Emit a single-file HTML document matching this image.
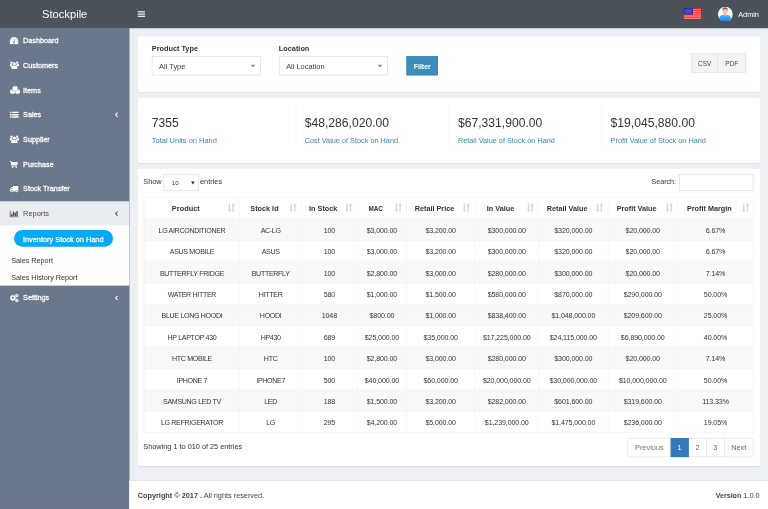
<!DOCTYPE html>
<html>
<head>
<meta charset="utf-8">
<title>Stockpile</title>
<style>
*{box-sizing:border-box;}
html,body{margin:0;padding:0;width:768px;height:509px;overflow:hidden;background:#ecf0f5;}
body{font-family:"Liberation Sans",sans-serif;position:relative;}
#clip{position:absolute;left:0;top:0;width:768px;height:509px;overflow:hidden;}
#s{filter:blur(0.5px);position:absolute;left:0;top:0;width:1366px;height:905px;transform:scale(0.562225);transform-origin:0 0;background:#ecf0f5;color:#333;font-size:13.2px;overflow:visible;font-family:"Liberation Sans",sans-serif;}
.abs{position:absolute;}
.t{position:absolute;white-space:nowrap;line-height:20px;}
svg{display:block;}
/* header */
#hdr{position:absolute;left:0;top:0;width:1366px;height:50px;background:#4b525a;}
#logo{position:absolute;left:0;top:0;width:230px;height:50px;line-height:50px;text-align:center;color:#fff;font-size:19.9px;}
/* sidebar */
#side{position:absolute;left:0;top:50px;width:230px;height:855px;background:#6b778a;}
.mi{position:absolute;left:0;width:230px;height:44px;color:#fff;font-weight:normal;-webkit-text-stroke:0.45px #fff;font-size:12.9px;line-height:46px;}
.mi span{position:absolute;left:41px;top:0;white-space:nowrap;}
.mi svg{position:absolute;}
.mi.act{background:#e9ecf0;color:#4a4a4a;font-weight:normal;font-size:13.2px;-webkit-text-stroke:0;}
#tree{position:absolute;left:0;top:351.300px;width:230px;height:106.300px;background:#fff;}
.sub{position:absolute;left:20px;color:#333;font-size:12.85px;line-height:30px;height:30px;white-space:nowrap;}
#pill{position:absolute;left:24.500px;top:7.700px;width:176px;height:30px;border-radius:15px;background:#03a9f4;color:#fff;font-weight:normal;-webkit-text-stroke:0.45px #fff;font-size:13.100px;line-height:33px;text-align:center;white-space:nowrap;}
/* boxes */
.box{position:absolute;left:245px;width:1106.700px;background:#fff;border-radius:3px;box-shadow:0 1px 1px rgba(0,0,0,0.1);}
.lbl{font-weight:bold;font-size:13px;color:#333;}
.sel{position:absolute;height:34px;border:1px solid #d2d6de;background:#fff;font-size:13.2px;line-height:34px;padding-left:12px;color:#444;}
.sel i{position:absolute;right:9px;top:14px;width:0;height:0;border-left:4px solid transparent;border-right:4px solid transparent;border-top:5px solid #888;}
.big{font-size:21.6px;color:#333;line-height:30px;}
.sm{font-size:13px;color:#4084b2;}
.vl{position:absolute;top:11px;width:1px;height:75px;background:#f0f0f0;}
/* table */
#dt{position:absolute;left:10px;top:51px;width:1084px;border-collapse:collapse;table-layout:fixed;}
#dt th,#dt td{border:1px solid #f0f0f0;height:38px;padding:0;text-align:center;vertical-align:middle;white-space:nowrap;overflow:hidden;color:#333;}
#dt th{font-weight:bold;font-size:12.9px;position:relative;padding-right:22px;}
#dt td{font-size:12.6px;color:#333;}
#dt tbody tr:nth-child(odd) td{background:#f9f9f9;}
.uc{letter-spacing:-0.58px;}
.nm{letter-spacing:-0.2px;}
.srt{position:absolute;right:7.500px;top:8.500px;opacity:0.2;}
#dt th:last-child .srt{right:6px;}
/* pagination */
.pg{position:absolute;top:479px;height:34px;border:1px solid #ddd;background:#fff;color:#666;font-size:13.2px;line-height:32px;text-align:center;}
#dt tbody td span{position:relative;top:1px;}
#dt tbody tr:nth-child(3) td span,#dt tbody tr:nth-child(8) td span{top:2px;}
#dt th:first-child,#dt td:first-child{border-left-width:2px;}
.h3{font-size:11.3px;}
.h0{font-size:13.1px;}

</style>
</head>
<body>
<svg width="0" height="0" style="position:absolute">
<defs>
<symbol id="i-sort" viewBox="0 0 13 15"><g fill="#333"><path d="M2.400 1h2.200v9.800h1.900L3.500 14.400.500 10.800h1.900z"/><path d="M8.400 14.400h2.200V4.200h1.900L9.500.600 6.500 4.200h1.900z"/></g></symbol>
<symbol id="i-dash" viewBox="0 0 16 13"><path fill="currentColor" d="M8 0a8 8 0 0 0-8 8c0 1.600.450 3.050 1.250 4.300.150.250.400.400.700.400h12.100c.300 0 .550-.150.700-.400A7.900 7.900 0 0 0 16 8a8 8 0 0 0-8-8z"/><g fill="#6b778a"><circle cx="2.600" cy="8" r=".800"/><circle cx="4.200" cy="4.200" r=".800"/><circle cx="8" cy="2.600" r=".800"/><circle cx="11.800" cy="4.200" r=".800"/><circle cx="13.400" cy="8" r=".800"/><circle cx="7.700" cy="9.800" r="1.500"/><path d="M7.200 9.200l1.900-5.200.8.300-1.500 5.300z"/></g></symbol>
<symbol id="i-users" viewBox="0 0 17 15"><g fill="currentColor"><circle cx="8.500" cy="5.500" r="2.750"/><circle cx="3.500" cy="3.300" r="2.100"/><circle cx="13.500" cy="3.300" r="2.100"/><path d="M4.600 14.800c-1 0-1.600-.600-1.600-1.500 0-2.600.700-5 3-5.200.700.700 1.500 1.100 2.500 1.100s1.800-.400 2.500-1.100c2.300.200 3 2.600 3 5.200 0 .900-.600 1.500-1.600 1.500z"/><path d="M0 8.300c0-1.800.500-2.900 1.700-2.900.500.500 1.100.800 1.800.800.400 0 .800-.100 1.100-.200-.100.300-.100.600-.100.900 0 .700.200 1.400.600 2-.900 0-1.700.400-2.300 1.100H1.400C.500 10 0 9.500 0 8.300z"/><path d="M17 8.300c0-1.800-.500-2.900-1.700-2.900-.500.500-1.100.800-1.800.800-.400 0-.800-.100-1.100-.200.100.300.100.600.100.900 0 .700-.200 1.400-.600 2 .900 0 1.700.400 2.300 1.100h1.400c.900 0 1.400-.500 1.400-1.700z"/></g></symbol>
<symbol id="i-cubes" viewBox="0 0 19 16"><g fill="currentColor" stroke="currentColor" stroke-width="0.600" stroke-linejoin="round"><path d="M9.500 .500l3.900 1.700v4.600L9.500 8.700 5.600 6.800V2.200z"/><path d="M5 6.900l4 1.700v4.800L5 15.400 1 13.400V8.600z"/><path d="M14 6.900l4 1.700v4.800l-4 2-4-2V8.600z"/></g><g fill="#6b778a" opacity="0.550"><path d="M9.500 1.500l2.300.9-2.300.9-2.300-.9z"/><path d="M5 8.100l2.300.9-2.300.9-2.300-.9z"/><path d="M14 8.100l2.300.9-2.300.9-2.300-.9z"/><path d="M9.350 8.800v5.800h.3V8.800z"/></g></symbol>
<symbol id="i-list" viewBox="0 0 16 12"><g fill="currentColor"><rect x="0" y="0.500" width="3" height="2.600" rx=".4"/><rect x="4.500" y="0.500" width="11.500" height="2.600" rx=".4"/><rect x="0" y="4.700" width="3" height="2.600" rx=".4"/><rect x="4.500" y="4.700" width="11.500" height="2.600" rx=".4"/><rect x="0" y="8.900" width="3" height="2.600" rx=".4"/><rect x="4.500" y="8.900" width="11.500" height="2.600" rx=".4"/></g></symbol>
<symbol id="i-cart" viewBox="0 0 15 13"><g fill="currentColor"><path d="M0 .5h2.600c.4 0 .6.300.7.700l.2.900h10.700c.5 0 .8.400.7.900l-.9 4c-.1.400-.4.700-.8.700H4.600l.2 1h8c.4 0 .7.300.7.700s-.3.700-.7.700H4.200c-.4 0-.6-.3-.7-.6L2 1.900H0z"/><circle cx="5.300" cy="11.700" r="1.200"/><circle cx="11.800" cy="11.700" r="1.200"/></g></symbol>
<symbol id="i-truck" viewBox="0 0 16 13"><g fill="currentColor"><path d="M6 .8h9.300c.4 0 .7.300.7.700v8.300c0 .4-.3.700-.7.700h-.9a2 2 0 0 0-4 0H6.800a2 2 0 0 0-4 0H1.400C.6 10.500.6 9.500 1 9.500V6.200c0-.3.100-.6.300-.800l2-2.200c.2-.2.500-.4.800-.4H6zM2.300 6.300h2.600V4H4.200c-.1 0-.2 0-.3.100L2.400 5.800c-.1.100-.1.200-.1.300z"/><circle cx="4.800" cy="10.800" r="1.400"/><circle cx="12.400" cy="10.800" r="1.400"/></g></symbol>
<symbol id="i-chart" viewBox="0 0 16 13"><g fill="currentColor"><path d="M0 .3h1.700v10.600H16v1.700H0z"/><rect x="2.800" y="6.300" width="2.400" height="4"/><rect x="5.900" y="2.300" width="2.400" height="8"/><rect x="9" y="4.300" width="2.400" height="6"/><rect x="12.100" y="1.300" width="2.400" height="9"/></g></symbol>
<symbol id="i-cogs" viewBox="0 0 17 16"><g fill="none" stroke="currentColor"><circle cx="5.900" cy="7.800" r="3.200" stroke-width="2.600"/><circle cx="5.900" cy="7.800" r="4.700" stroke-width="1.600" stroke-dasharray="1.850 1.850"/><circle cx="13" cy="3.500" r="1.800" stroke-width="1.800"/><circle cx="13" cy="3.500" r="2.900" stroke-width="1.100" stroke-dasharray="1.140 1.140"/><circle cx="13" cy="12.300" r="1.800" stroke-width="1.800"/><circle cx="13" cy="12.300" r="2.900" stroke-width="1.100" stroke-dasharray="1.140 1.140"/></g></symbol>
<symbol id="i-angle" viewBox="0 0 6 10"><path d="M4.800 1.200L1.500 5l3.300 3.800" fill="none" stroke="currentColor" stroke-width="1.850"/></symbol>
</defs>
</svg>

<div id="clip"><div id="s">
<div class="abs" style="left:-24px;top:-24px;width:1414px;height:953px;background:#ecf0f5"></div>
<div class="abs" style="left:-24px;top:-24px;width:1414px;height:74px;background:#4b525a"></div>
<div class="abs" style="left:-24px;top:50px;width:254px;height:879px;background:#6b778a"></div>
<div class="abs" style="left:230px;top:855px;width:1160px;height:74px;background:#fff"></div>
<div id="hdr">
  <div id="logo">Stockpile</div>
  <div class="abs" style="left:245px;top:20px;width:13px;height:2px;background:#fff;box-shadow:0 4px 0 #fff,0 8px 0 #fff;"></div>
  <!-- flag -->
  <svg class="abs" style="left:1216px;top:14px" width="31" height="21" viewBox="0 0 31 21">
    <rect width="31" height="21" fill="#ff2b2b"/>
    <g fill="#ffb0b0" opacity="0.800"><rect y="2.400" width="31" height="1.500"/><rect y="5.600" width="31" height="1.500"/><rect y="8.800" width="31" height="1.500"/><rect y="12" width="31" height="1.500"/><rect y="15.200" width="31" height="1.500"/><rect y="18" width="31" height="1.300"/></g>
    <rect y="0" width="31" height="1.200" fill="#c81a1a"/><rect y="19.800" width="31" height="1.200" fill="#b81414"/>
    <rect width="16.500" height="12" fill="#22229a"/>
    <rect x="1.500" y="1.500" width="13.500" height="9" fill="#4a4bb8"/>
  </svg>
  <!-- avatar -->
  <svg class="abs" style="left:1277.400px;top:12px" width="26.400" height="26.400" viewBox="0 0 25 25">
    <defs><clipPath id="cp"><circle cx="12.500" cy="12.500" r="12.500"/></clipPath>
    <linearGradient id="bg1" x1="0" y1="0" x2="0" y2="1"><stop offset="0" stop-color="#52bbff"/><stop offset="1" stop-color="#0f86e6"/></linearGradient></defs>
    <g clip-path="url(#cp)"><rect width="25" height="25" fill="#fff"/>
    <path d="M2.400 25V17.800C2.400 14.600 6 13.700 9.200 13.400L12 14.800l2.800-1.400c3.200.3 6.800 1.200 6.800 4.400V25z" fill="url(#bg1)"/>
    <rect x="10" y="10.500" width="4" height="4" fill="#e7a585"/>
    <ellipse cx="12" cy="7.800" rx="4.400" ry="5.200" fill="#f6c6aa"/>
    <path d="M7.300 7C6.800 2.800 9.300 1 12 1c3.100 0 5.300 1.900 4.700 6-.9-2.200-2.500-2.800-4.700-2.600C9.900 4.200 8.300 5 7.300 7z" fill="#8d5b45"/></g>
  </svg>
  <div class="t" style="left:1313px;top:16.500px;color:#fff;font-size:13px;">Admin</div>
</div>

<div id="side">
  <div class="mi" style="top:0"><svg style="left:17px;top:15.500px" width="16" height="13"><use href="#i-dash"/></svg><span>Dashboard</span></div>
  <div class="mi" style="top:44px"><svg style="left:17px;top:14px" width="17" height="15"><use href="#i-users"/></svg><span>Customers</span></div>
  <div class="mi" style="top:88px"><svg style="left:16.500px;top:13.500px" width="19.500" height="16"><use href="#i-cubes"/></svg><span>Items</span></div>
  <div class="mi" style="top:132px"><svg style="left:17px;top:16px" width="16.500" height="12"><use href="#i-list"/></svg><span style="top:-1px">Sales</span><svg style="left:203.500px;top:17px" width="6.500" height="10"><use href="#i-angle"/></svg></div>
  <div class="mi" style="top:176px"><svg style="left:17px;top:14px" width="17" height="15"><use href="#i-users"/></svg><span>Supplier</span></div>
  <div class="mi" style="top:220px"><svg style="left:17px;top:15.500px" width="15" height="13"><use href="#i-cart"/></svg><span>Purchase</span></div>
  <div class="mi" style="top:264px"><svg style="left:17px;top:15.500px" width="16" height="13"><use href="#i-truck"/></svg><span style="top:-1px">Stock Transfer</span></div>
  <div class="mi act" style="top:308px"><svg style="left:17px;top:15.500px" width="16" height="13"><use href="#i-chart"/></svg><span>Reports</span><svg style="left:203.500px;top:17px" width="6.500" height="10"><use href="#i-angle"/></svg></div>
  <div id="tree">
    <div id="pill">Inventory Stock on Hand</div>
    <div class="sub" style="top:46.700px">Sales Report</div>
    <div class="sub" style="top:77.8px">Sales History Report</div>
  </div>
  <div class="mi" style="top:457.600px;height:44.400px"><svg style="left:17px;top:14px" width="17" height="16"><use href="#i-cogs"/></svg><span style="top:-1px">Settings</span><svg style="left:203.500px;top:17px" width="6.500" height="10"><use href="#i-angle"/></svg></div>
</div>

<div class="box" id="b1" style="top:65px;height:99px;">
  <div class="t lbl" style="left:25px;top:11.500px;">Product Type</div>
  <div class="sel" style="left:25px;top:35px;width:194px;">All Type<i></i></div>
  <div class="t lbl" style="left:251px;top:11.500px;">Location</div>
  <div class="sel" style="left:251px;top:35px;width:194px;">All Location<i></i></div>
  <div class="abs" style="left:478px;top:35px;width:56px;height:34px;background:#3c8dbc;border:1px solid #367fa9;border-radius:0;color:#fff;font-weight:bold;font-size:12.400px;line-height:34px;text-align:center;">Filter</div>
  <div class="abs" style="left:984.300px;top:29.600px;width:48px;height:34px;background:#f4f4f4;border:1px solid #ddd;color:#444;font-size:11.400px;line-height:35px;text-align:center;">CSV</div>
  <div class="abs" style="left:1031.300px;top:29.600px;width:50.500px;height:34px;background:#f4f4f4;border:1px solid #ddd;color:#444;font-size:11.400px;line-height:35px;text-align:center;">PDF</div>
</div>
<div class="box" id="b2" style="top:174px;height:116px;">
  <div class="t big" style="left:25px;top:29px;">7355</div>
  <div class="t sm" style="left:25px;top:66px;font-size:13.250px">Total Units on Hand</div>
  <div class="vl" style="left:281px"></div>
  <div class="t big" style="left:297px;top:29px;">$48,286,020.00</div>
  <div class="t sm" style="left:297px;top:66px;">Cost Value of Stock on Hand</div>
  <div class="vl" style="left:552px"></div>
  <div class="t big" style="left:569.5px;top:29px;">$67,331,900.00</div>
  <div class="t sm" style="left:569.5px;top:66px;">Retail Value of Stock on Hand</div>
  <div class="vl" style="left:824px"></div>
  <div class="t big" style="left:841px;top:29px;">$19,045,880.00</div>
  <div class="t sm" style="left:841px;top:66px;">Profit Value of Stock on Hand</div>
</div>
<div class="box" id="b3" style="top:300px;height:529px;">
  <div class="t" style="left:10px;top:13px;font-size:13px;">Show</div>
  <div class="abs" style="left:46px;top:10px;width:63px;height:29px;border:1px solid #d2d6de;background:#fff;font-size:11px;line-height:29px;padding-left:13.500px;color:#333;">10<i class="abs" style="right:7px;top:12px;width:0;height:0;border-left:3px solid transparent;border-right:3px solid transparent;border-top:5px solid #222;"></i></div>
  <div class="t" style="left:110.7px;top:13px;font-size:13.100px;">entries</div>
  <div class="t" style="left:914px;top:13px;font-size:12.600px;">Search:</div>
  <div class="abs" style="left:963px;top:10px;width:132px;height:29px;border:1px solid #d2d6de;background:#fff;"></div>
  <table id="dt"><colgroup><col style="width:170.4px"><col style="width:110px"><col style="width:98.9px"><col style="width:88px"><col style="width:121px"><col style="width:114px"><col style="width:123px"><col style="width:124px"><col style="width:134.7px"></colgroup>
<thead><tr><th><span class="h0">Product</span><i class="srt"><svg width="14.500" height="16.500" viewBox="0 0 13 15"><use href="#i-sort"/></svg></i></th><th><span class="h1">Stock Id</span><i class="srt"><svg width="14.500" height="16.500" viewBox="0 0 13 15"><use href="#i-sort"/></svg></i></th><th><span class="h2">In Stock</span><i class="srt"><svg width="14.500" height="16.500" viewBox="0 0 13 15"><use href="#i-sort"/></svg></i></th><th><span class="h3">MAC</span><i class="srt"><svg width="14.500" height="16.500" viewBox="0 0 13 15"><use href="#i-sort"/></svg></i></th><th><span class="h4">Retail Price</span><i class="srt"><svg width="14.500" height="16.500" viewBox="0 0 13 15"><use href="#i-sort"/></svg></i></th><th><span class="h5">In Value</span><i class="srt"><svg width="14.500" height="16.500" viewBox="0 0 13 15"><use href="#i-sort"/></svg></i></th><th><span class="h6">Retail Value</span><i class="srt"><svg width="14.500" height="16.500" viewBox="0 0 13 15"><use href="#i-sort"/></svg></i></th><th><span class="h7">Profit Value</span><i class="srt"><svg width="14.500" height="16.500" viewBox="0 0 13 15"><use href="#i-sort"/></svg></i></th><th><span class="h8">Profit Margin</span><i class="srt"><svg width="14.500" height="16.500" viewBox="0 0 13 15"><use href="#i-sort"/></svg></i></th></tr></thead><tbody>
<tr><td><span class="uc">LG AIRCONDITIONER</span></td><td><span class="uc">AC-LG</span></td><td><span class="nm">100</span></td><td><span class="nm">$3,000.00</span></td><td><span class="nm">$3,200.00</span></td><td><span class="nm">$300,000.00</span></td><td><span class="nm">$320,000.00</span></td><td><span class="nm">$20,000.00</span></td><td><span class="nm">6.67%</span></td></tr>
<tr><td><span class="uc">ASUS MOBILE</span></td><td><span class="uc">ASUS</span></td><td><span class="nm">100</span></td><td><span class="nm">$3,000.00</span></td><td><span class="nm">$3,200.00</span></td><td><span class="nm">$300,000.00</span></td><td><span class="nm">$320,000.00</span></td><td><span class="nm">$20,000.00</span></td><td><span class="nm">6.67%</span></td></tr>
<tr><td><span class="uc">BUTTERFLY FRIDGE</span></td><td><span class="uc">BUTTERFLY</span></td><td><span class="nm">100</span></td><td><span class="nm">$2,800.00</span></td><td><span class="nm">$3,000.00</span></td><td><span class="nm">$280,000.00</span></td><td><span class="nm">$300,000.00</span></td><td><span class="nm">$20,000.00</span></td><td><span class="nm">7.14%</span></td></tr>
<tr><td><span class="uc">WATER HITTER</span></td><td><span class="uc">HITTER</span></td><td><span class="nm">580</span></td><td><span class="nm">$1,000.00</span></td><td><span class="nm">$1,500.00</span></td><td><span class="nm">$580,000.00</span></td><td><span class="nm">$870,000.00</span></td><td><span class="nm">$290,000.00</span></td><td><span class="nm">50.00%</span></td></tr>
<tr><td><span class="uc">BLUE LONG HOODI</span></td><td><span class="uc">HOODI</span></td><td><span class="nm">1048</span></td><td><span class="nm">$800.00</span></td><td><span class="nm">$1,000.00</span></td><td><span class="nm">$838,400.00</span></td><td><span class="nm">$1,048,000.00</span></td><td><span class="nm">$209,600.00</span></td><td><span class="nm">25.00%</span></td></tr>
<tr><td><span class="uc">HP LAPTOP 430</span></td><td><span class="uc">HP430</span></td><td><span class="nm">689</span></td><td><span class="nm">$25,000.00</span></td><td><span class="nm">$35,000.00</span></td><td><span class="nm">$17,225,000.00</span></td><td><span class="nm">$24,115,000.00</span></td><td><span class="nm">$6,890,000.00</span></td><td><span class="nm">40.00%</span></td></tr>
<tr><td><span class="uc">HTC MOBILE</span></td><td><span class="uc">HTC</span></td><td><span class="nm">100</span></td><td><span class="nm">$2,800.00</span></td><td><span class="nm">$3,000.00</span></td><td><span class="nm">$280,000.00</span></td><td><span class="nm">$300,000.00</span></td><td><span class="nm">$20,000.00</span></td><td><span class="nm">7.14%</span></td></tr>
<tr><td><span class="uc">IPHONE 7</span></td><td><span class="uc">IPHONE7</span></td><td><span class="nm">500</span></td><td><span class="nm">$40,000.00</span></td><td><span class="nm">$60,000.00</span></td><td><span class="nm">$20,000,000.00</span></td><td><span class="nm">$30,000,000.00</span></td><td><span class="nm">$10,000,000.00</span></td><td><span class="nm">50.00%</span></td></tr>
<tr><td><span class="uc">SAMSUNG LED TV</span></td><td><span class="uc">LED</span></td><td><span class="nm">188</span></td><td><span class="nm">$1,500.00</span></td><td><span class="nm">$3,200.00</span></td><td><span class="nm">$282,000.00</span></td><td><span class="nm">$601,600.00</span></td><td><span class="nm">$319,600.00</span></td><td><span class="nm">113.33%</span></td></tr>
<tr><td><span class="uc">LG REFRIGERATOR</span></td><td><span class="uc">LG</span></td><td><span class="nm">295</span></td><td><span class="nm">$4,200.00</span></td><td><span class="nm">$5,000.00</span></td><td><span class="nm">$1,239,000.00</span></td><td><span class="nm">$1,475,000.00</span></td><td><span class="nm">$236,000.00</span></td><td><span class="nm">19.05%</span></td></tr>
</tbody></table>
  <div class="t" style="left:10px;top:485px;font-size:13px;">Showing 1 to 010 of 25 entries</div>
  <div class="pg" style="left:871px;width:78px;border-radius:4px 0 0 4px;color:#777;">Previous</div>
  <div class="pg" style="left:947.500px;width:32.500px;background:#337ab7;border-color:#337ab7;color:#fff;z-index:2;">1</div>
  <div class="pg" style="left:979px;width:33px;">2</div>
  <div class="pg" style="left:1011px;width:33px;">3</div>
  <div class="pg" style="left:1043px;width:52px;border-radius:0 4px 4px 0;">Next</div>
</div>

<div id="ftr" class="abs" style="left:230px;top:854px;width:1136px;height:51px;background:#fff;border-top:1px solid #d2d6de;color:#444;">
  <div class="t" style="left:15px;top:16.500px;font-size:13px;"><b style="font-size:13px">Copyright © 2017 .</b> All rights reserved.</div>
  <div class="t" style="right:15px;top:16.500px;font-size:13px;"><b style="font-size:12.600px">Version</b> 1.0.0</div>
</div>

</div></div>
</body>
</html>
